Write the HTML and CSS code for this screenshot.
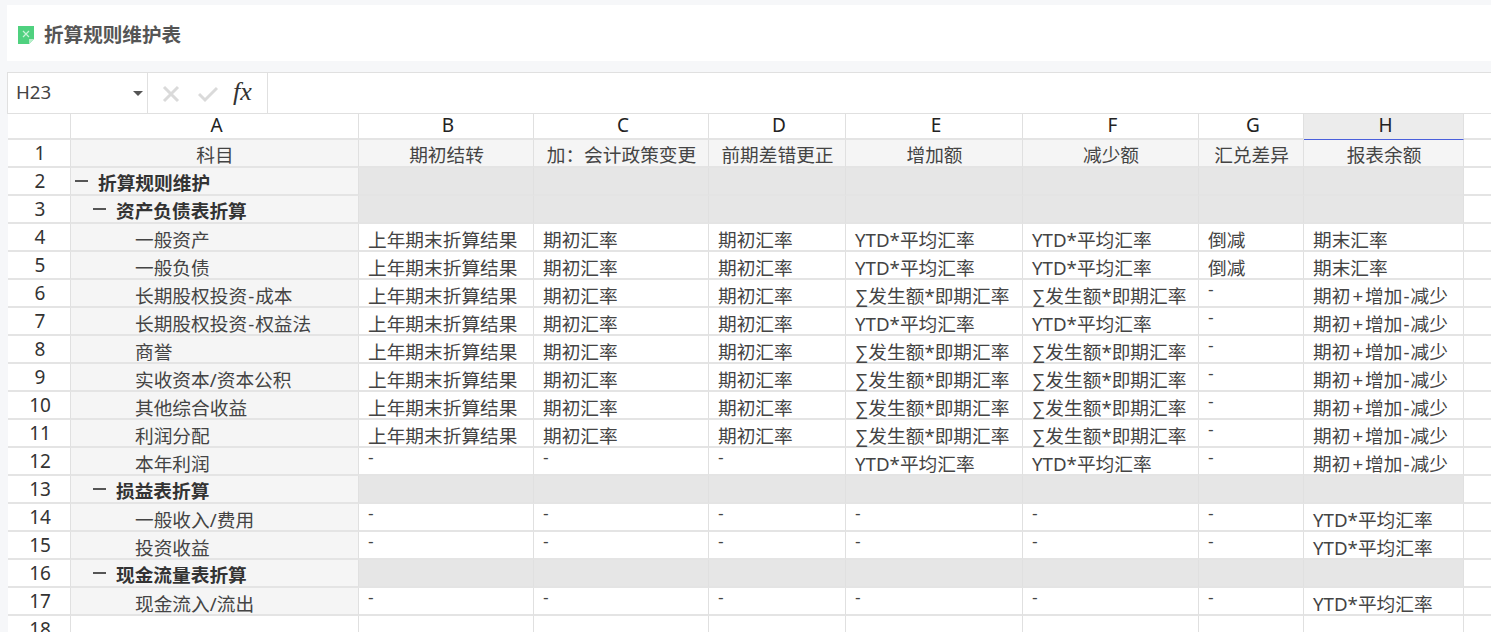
FILE: index.html
```html
<!DOCTYPE html>
<html lang="zh-CN">
<head>
<meta charset="utf-8">
<title>折算规则维护表</title>
<link rel="stylesheet" href="styles.css">
</head>
<body>
<header class="titlebar">
  <svg class="file-icon" width="16" height="19" viewBox="0 0 16 19"><path d="M0 1h16v13l-5 5H0z" fill="#4fd17f"/><path d="M11 19v-5h5z" fill="#b5eec9"/><path d="M5 6l6 6M11 6l-6 6" stroke="#c9f3d8" stroke-width="1.2" fill="none"/></svg>
  <h1 class="title">折算规则维护表</h1>
</header>
<div class="formula">
  <div class="namebox"><span>H23</span><i class="caret"></i></div>
  <div class="actions">
    <svg width="18" height="18" viewBox="0 0 18 18"><path d="M2 2l14 14M16 2L2 16" stroke="#dadada" stroke-width="3" fill="none"/></svg>
    <svg width="20" height="18" viewBox="0 0 20 18"><path d="M1 9l6 6L19 3" stroke="#dadada" stroke-width="3" fill="none"/></svg>
    <span class="fx">fx</span>
  </div>
  <div class="input"></div>
</div>
<main class="sheet">
  <div class="corner"></div><div class="ch">A</div><div class="ch">B</div><div class="ch">C</div><div class="ch">D</div><div class="ch">E</div><div class="ch">F</div><div class="ch">G</div><div class="ch sel">H</div><div class="ch"></div>

  <div class="rh">1</div><div class="c hd">科目</div><div class="c hd">期初结转</div><div class="c hd">加：会计政策变更</div><div class="c hd">前期差错更正</div><div class="c hd">增加额</div><div class="c hd">减少额</div><div class="c hd">汇兑差异</div><div class="c hd">报表余额</div><div class="c"></div>

  <div class="rh">2</div><div class="c a b l0"><i class="minus"></i>折算规则维护</div><div class="c g"></div><div class="c g"></div><div class="c g"></div><div class="c g"></div><div class="c g"></div><div class="c g"></div><div class="c g"></div><div class="c"></div>

  <div class="rh">3</div><div class="c a b l1"><i class="minus"></i>资产负债表折算</div><div class="c g"></div><div class="c g"></div><div class="c g"></div><div class="c g"></div><div class="c g"></div><div class="c g"></div><div class="c g"></div><div class="c"></div>

  <div class="rh">4</div><div class="c a l2">一般资产</div><div class="c">上年期末折算结果</div><div class="c">期初汇率</div><div class="c">期初汇率</div><div class="c">YTD*平均汇率</div><div class="c">YTD*平均汇率</div><div class="c">倒减</div><div class="c">期末汇率</div><div class="c"></div>

  <div class="rh">5</div><div class="c a l2">一般负债</div><div class="c">上年期末折算结果</div><div class="c">期初汇率</div><div class="c">期初汇率</div><div class="c">YTD*平均汇率</div><div class="c">YTD*平均汇率</div><div class="c">倒减</div><div class="c">期末汇率</div><div class="c"></div>

  <div class="rh">6</div><div class="c a l2">长期股权投资<span class="dash">-</span>成本</div><div class="c">上年期末折算结果</div><div class="c">期初汇率</div><div class="c">期初汇率</div><div class="c"><span class="sum">∑</span>发生额*即期汇率</div><div class="c"><span class="sum">∑</span>发生额*即期汇率</div><div class="c n">-</div><div class="c">期初<span class="plus">+</span>增加<span class="dash">-</span>减少</div><div class="c"></div>

  <div class="rh">7</div><div class="c a l2">长期股权投资<span class="dash">-</span>权益法</div><div class="c">上年期末折算结果</div><div class="c">期初汇率</div><div class="c">期初汇率</div><div class="c">YTD*平均汇率</div><div class="c">YTD*平均汇率</div><div class="c n">-</div><div class="c">期初<span class="plus">+</span>增加<span class="dash">-</span>减少</div><div class="c"></div>

  <div class="rh">8</div><div class="c a l2">商誉</div><div class="c">上年期末折算结果</div><div class="c">期初汇率</div><div class="c">期初汇率</div><div class="c"><span class="sum">∑</span>发生额*即期汇率</div><div class="c"><span class="sum">∑</span>发生额*即期汇率</div><div class="c n">-</div><div class="c">期初<span class="plus">+</span>增加<span class="dash">-</span>减少</div><div class="c"></div>

  <div class="rh">9</div><div class="c a l2">实收资本/资本公积</div><div class="c">上年期末折算结果</div><div class="c">期初汇率</div><div class="c">期初汇率</div><div class="c"><span class="sum">∑</span>发生额*即期汇率</div><div class="c"><span class="sum">∑</span>发生额*即期汇率</div><div class="c n">-</div><div class="c">期初<span class="plus">+</span>增加<span class="dash">-</span>减少</div><div class="c"></div>

  <div class="rh">10</div><div class="c a l2">其他综合收益</div><div class="c">上年期末折算结果</div><div class="c">期初汇率</div><div class="c">期初汇率</div><div class="c"><span class="sum">∑</span>发生额*即期汇率</div><div class="c"><span class="sum">∑</span>发生额*即期汇率</div><div class="c n">-</div><div class="c">期初<span class="plus">+</span>增加<span class="dash">-</span>减少</div><div class="c"></div>

  <div class="rh">11</div><div class="c a l2">利润分配</div><div class="c">上年期末折算结果</div><div class="c">期初汇率</div><div class="c">期初汇率</div><div class="c"><span class="sum">∑</span>发生额*即期汇率</div><div class="c"><span class="sum">∑</span>发生额*即期汇率</div><div class="c n">-</div><div class="c">期初<span class="plus">+</span>增加<span class="dash">-</span>减少</div><div class="c"></div>

  <div class="rh">12</div><div class="c a l2">本年利润</div><div class="c n">-</div><div class="c n">-</div><div class="c n">-</div><div class="c">YTD*平均汇率</div><div class="c">YTD*平均汇率</div><div class="c n">-</div><div class="c">期初<span class="plus">+</span>增加<span class="dash">-</span>减少</div><div class="c"></div>

  <div class="rh">13</div><div class="c a b l1"><i class="minus"></i>损益表折算</div><div class="c g"></div><div class="c g"></div><div class="c g"></div><div class="c g"></div><div class="c g"></div><div class="c g"></div><div class="c g"></div><div class="c"></div>

  <div class="rh">14</div><div class="c a l2">一般收入/费用</div><div class="c n">-</div><div class="c n">-</div><div class="c n">-</div><div class="c n">-</div><div class="c n">-</div><div class="c n">-</div><div class="c">YTD*平均汇率</div><div class="c"></div>

  <div class="rh">15</div><div class="c a l2">投资收益</div><div class="c n">-</div><div class="c n">-</div><div class="c n">-</div><div class="c n">-</div><div class="c n">-</div><div class="c n">-</div><div class="c">YTD*平均汇率</div><div class="c"></div>

  <div class="rh">16</div><div class="c a b l1"><i class="minus"></i>现金流量表折算</div><div class="c g"></div><div class="c g"></div><div class="c g"></div><div class="c g"></div><div class="c g"></div><div class="c g"></div><div class="c g"></div><div class="c"></div>

  <div class="rh">17</div><div class="c a l2">现金流入/流出</div><div class="c n">-</div><div class="c n">-</div><div class="c n">-</div><div class="c n">-</div><div class="c n">-</div><div class="c n">-</div><div class="c">YTD*平均汇率</div><div class="c"></div>

  <div class="rh">18</div><div class="c"></div><div class="c"></div><div class="c"></div><div class="c"></div><div class="c"></div><div class="c"></div><div class="c"></div><div class="c"></div><div class="c"></div>
</main>
</body>
</html>
```

FILE: styles.css
```css
* { box-sizing: border-box; }
html, body { margin: 0; height: 632px; overflow: hidden; }
body {
  background: #f6f7f9;
  font-family: "Noto Sans", "Noto Sans CJK SC", sans-serif;
  color: #333;
  padding: 5px 0 0 7px;
}
.titlebar {
  height: 56px;
  background: #fff;
  display: flex;
  align-items: center;
  gap: 10px;
  padding-left: 11px;
}
.file-icon { margin-top: 2px; }
.title {
  margin: 0;
  font-size: 19.6px;
  font-weight: 700;
  color: #555;
}
.formula {
  margin-top: 11px;
  height: 42px;
  display: flex;
  background: #fff;
  border-top: 1px solid #e0e0e0;
  border-left: 1px solid #e0e0e0;
  border-bottom: 1px solid #e0e0e0;
}
.namebox {
  width: 140px;
  display: flex;
  align-items: center;
  justify-content: space-between;
  padding: 0 4px 3px 8px;
  border-right: 1px solid #e0e0e0;
  font-size: 18.7px;
  color: #444;
}
.caret {
  width: 0;
  height: 0;
  margin-top: 3px;
  border-left: 5px solid transparent;
  border-right: 5px solid transparent;
  border-top: 5px solid #555;
}
.actions {
  width: 120px;
  display: flex;
  align-items: center;
  gap: 18px;
  padding: 2px 0 0 14px;
  border-right: 1px solid #e0e0e0;
}
.fx {
  font-family: "Liberation Serif", serif;
  font-style: italic;
  font-size: 26px;
  line-height: 26px;
  color: #333;
  margin: -4px 0 0 -3px;
}
.input { flex: 1; }
.sheet {
  display: grid;
  grid-template-columns: 63px 288px 175px 175px 137px 177px 176px 105px 160px 28px;
  grid-template-rows: 26px;
  grid-auto-rows: 28px;
  width: 1484px;
  margin-left: 1px;
  background: #fff;
  font-size: 18.7px;
  color: #444;
}
.corner, .ch, .rh, .c {
  border-right: 1px solid #e0e0e0;
  border-bottom: 2px solid #e4e4e4;
  white-space: nowrap;
  line-height: 27px;
}
.ch {
  text-align: center;
  color: #222;
  font-size: 19px;
  line-height: 23px;
  padding-left: 4px;
}
.ch.sel { background: #ececec; border-bottom: 1px solid #4a5fdc; }
.rh { text-align: center; color: #333; font-size: 19px; line-height: 26px; padding-left: 2px; }
.c { padding: 2px 0 0 9px; }
.hd { background: #f5f5f5; text-align: center; padding: 1px 0 0 1px; }
.a { background: #f5f5f5; }
.g { background: #e6e6e6; }
.b { font-weight: 700; color: #333; display: flex; align-items: center; padding-top: 3px; }
.l0 { padding-left: 4px; }
.l1 { padding-left: 22px; }
.l2 { padding-left: 64px; }
.n {
  padding-top: 2px;
  font-family: "Liberation Sans", sans-serif;
  font-size: 17px;
  line-height: 16px;
}
.minus {
  width: 13px;
  height: 2px;
  background: #555;
  margin: -3px 10px 0 0;
  flex: none;
}
.sum { font-family: "Liberation Sans", sans-serif; }
.plus { margin: 0 2px; }
.dash { margin: 0 1px; }
```
